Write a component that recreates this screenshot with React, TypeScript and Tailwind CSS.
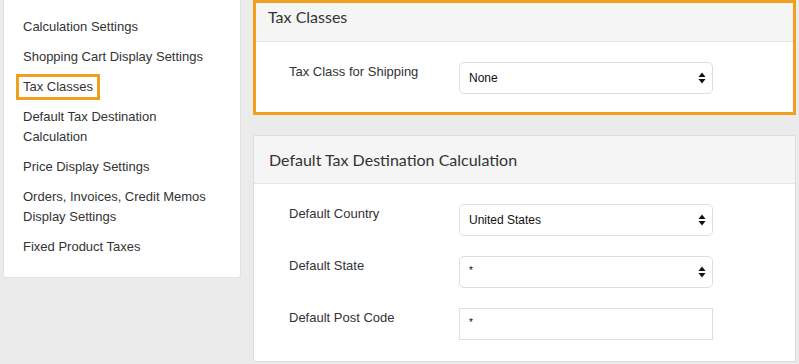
const navItems = [
  "Calculation Settings",
  "Shopping Cart Display Settings",
  "Tax Classes",
  "Default Tax Destination Calculation",
  "Price Display Settings",
  "Orders, Invoices, Credit Memos Display Settings",
  "Fixed Product Taxes",
];

function Arrows() {
  return (
    <svg width="8" height="12" viewBox="0 0 8 12" className="shrink-0">
      <path d="M4 0.5 L7.5 5 L0.5 5 Z" fill="#111" />
      <path d="M4 11.5 L7.5 7 L0.5 7 Z" fill="#111" />
    </svg>
  );
}

function Select({ value, square }: { value: string; square?: boolean }) {
  return (
    <div
      className={`flex h-[32px] w-[254px] items-center justify-between border border-[#dedede] bg-white pl-[9px] pr-[6px] text-[12px] text-[#111] ${
        square ? "" : "rounded-[5px]"
      }`}
    >
      <span className={value === "*" ? "-mt-[3px] text-[10px]" : ""}>{value}</span>
      {!square && <Arrows />}
    </div>
  );
}

function Row({ label, value, square, inset }: { label: string; value: string; square?: boolean; inset?: boolean }) {
  return (
    <div className="flex items-start">
      <div
        className={`leading-[20px] text-[#333] ${inset ? "w-[203px] pl-[33px]" : "w-[205px] pl-[35px]"}`}
      >
        {label}
      </div>
      <Select value={value} square={square} />
    </div>
  );
}

export default function App() {
  return (
    <div
      className="flex h-[364px] w-[799px] overflow-hidden bg-[#ebebeb] text-[13px]"
      style={{ fontFamily: "'Liberation Sans', Arial, sans-serif" }}
    >
      {/* Sidebar */}
      <div className="ml-[3px] w-[238px] self-start rounded-b-[3px] border border-t-0 border-[#e2e2e2] bg-white pb-[15px] pl-[19px] pr-[20px] pt-[12px]">
        {navItems.map((item) => (
          <div className="py-[5px] leading-[20px] text-[#333]" key={item}>
            {item === "Tax Classes" ? (
              <span className="-ml-1 inline-block px-1 outline-3 outline-solid outline-[#f0a020]">{item}</span>
            ) : (
              item
            )}
          </div>
        ))}
      </div>

      {/* Main column */}
      <div className="ml-[12px] flex w-[543px] flex-col gap-[20px]">
        <div className="h-[115px] shrink-0 border-[3px] border-[#f0a020] bg-white">
          <div
            className="h-[39px] border-b border-[#e5e5e5] bg-[#f5f5f5] pl-[12px] pt-[4px] text-[16px] leading-[20px] text-[#333]"
            style={{ fontFamily: "Lato, 'Open Sans', sans-serif" }}
          >
            Tax Classes
          </div>
          <div className="pt-[20px]">
            <Row label="Tax Class for Shipping" value="None" inset />
          </div>
        </div>

        <div className="h-[227px] shrink-0 rounded-[2px] border border-[#dddddd] bg-white">
          <div
            className="flex h-[48px] items-center border-b border-[#e5e5e5] bg-[#f5f5f5] pl-[15px] text-[16px] text-[#333]"
            style={{ fontFamily: "Lato, 'Open Sans', sans-serif" }}
          >
            Default Tax Destination Calculation
          </div>
          <div className="flex flex-col gap-[20px] pt-[20px]">
            <Row label="Default Country" value="United States" />
            <Row label="Default State" value="*" />
            <Row label="Default Post Code" value="*" square />
          </div>
        </div>
      </div>
    </div>
  );
}
